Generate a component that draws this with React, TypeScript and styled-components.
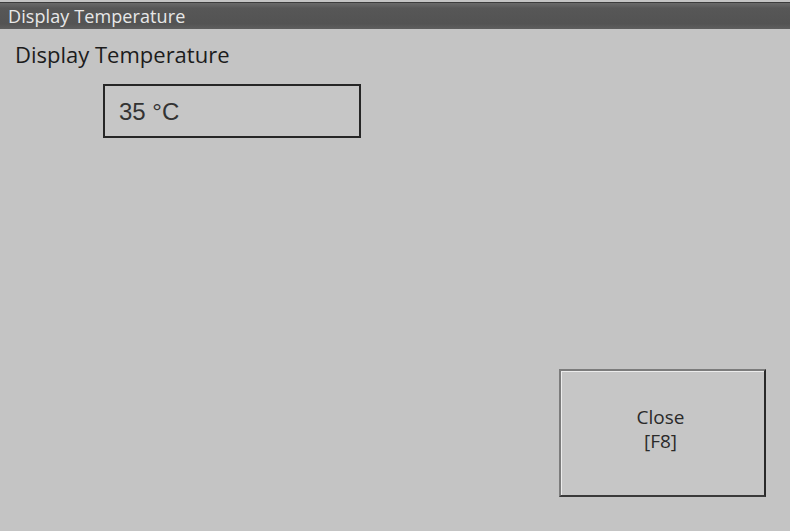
import React from 'react';
import styled, { createGlobalStyle } from 'styled-components';

const GlobalStyle = createGlobalStyle`
  html, body {
    margin: 0;
    padding: 0;
    background: #c4c4c4;
  }
  body {
    font-family: 'Open Sans', 'Noto Sans', sans-serif;
  }
`;

const App = () => {
  function closeWindow() {
    console.log('close display temperature');
  }

  return (
    <Window>
      <GlobalStyle />
      <TitleBar>
        <TitleText>Display Temperature</TitleText>
      </TitleBar>
      <Content>
        <Heading>Display Temperature</Heading>
        <ValueField>
          <ValueText>35 °C</ValueText>
        </ValueField>
        <Spacer />
        <CloseBtn onClick={closeWindow}>
          <span>Close</span>
          <span>[F8]</span>
        </CloseBtn>
      </Content>
    </Window>
  );
};

const Window = styled.div`
  width: 790px;
  height: 531px;
  display: flex;
  flex-direction: column;
  background-color: #c4c4c4;
  overflow: hidden;
`;

const TitleBar = styled.div`
  height: 26px;
  margin-top: 2px;
  border-top: 1px solid #3c3c3c;
  display: flex;
  align-items: center;
  padding-left: 8px;
  background: linear-gradient(#6a6a6a 0%, #575757 20%, #535353 80%, #5e5e5e 100%);
`;

const TitleText = styled.span`
  font-size: 18px;
  color: #e8e8e8;
  letter-spacing: 0.1px;
  margin-top: -1px;
`;

const Content = styled.div`
  flex: 1;
  display: flex;
  flex-direction: column;
  padding: 10px 24px 34px 15px;
`;

const Heading = styled.div`
  font-size: 22px;
  color: #1c1c1c;
  line-height: 28px;
  margin-top: 1px;
`;

const ValueField = styled.div`
  margin-top: 16px;
  margin-left: 88px;
  width: 240px;
  height: 50px;
  border: 2px solid #262626;
  background-color: #c6c6c6;
  display: flex;
  align-items: center;
  padding-left: 14px;
  box-sizing: content-box;
`;

const ValueText = styled.span`
  font-family: 'Liberation Sans', Arial, sans-serif;
  font-size: 24px;
  color: #333;
  padding-top: 2px;
`;

const Spacer = styled.div`
  flex: 1;
`;

const CloseBtn = styled.button`
  align-self: flex-end;
  width: 207px;
  height: 128px;
  box-sizing: border-box;
  display: flex;
  flex-direction: column;
  align-items: center;
  justify-content: center;
  background-color: #c6c6c6;
  border-top: 2px solid #7c7c7c;
  border-left: 2px solid #7c7c7c;
  border-right: 2px solid #2a2a2a;
  border-bottom: 2px solid #3a3a3a;
  box-shadow: inset 1px 1px 0 #ececec;
  font-family: 'Open Sans', 'Noto Sans', sans-serif;
  font-size: 19px;
  line-height: 24px;
  color: #2a2a2a;
  padding: 0 4px 8px 0;
  cursor: pointer;
`;

export default App;
